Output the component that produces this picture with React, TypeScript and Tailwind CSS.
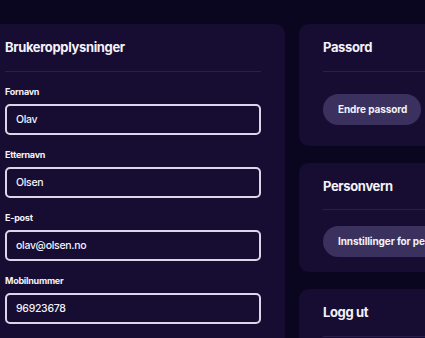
import React from "react";

const fields = [
  { label: "Fornavn", value: "Olav" },
  { label: "Etternavn", value: "Olsen" },
  { label: "E-post", value: "olav@olsen.no" },
  { label: "Mobilnummer", value: "96923678" },
];

export default function App() {
  return (
    <div className="w-[425px] h-[338px] overflow-hidden bg-[#0b0620] font-['Inter',sans-serif] text-[#f4f2f8]">
      <div className="flex items-start gap-[14px] ml-[-19px] pt-[24px]">
        {/* Brukeropplysninger */}
        <div className="w-[304px] shrink-0 rounded-[10px] bg-[#170d33] px-6 pt-[13px] pb-6">
          <h2 className="text-[13px] leading-[20px] font-bold tracking-[-0.35px]">Brukeropplysninger</h2>
          <div className="h-px bg-[#2a1f4c] mt-[14px] mb-[13px]" />
          <div className="flex flex-col gap-[13px]">
            {fields.map((f) => (
              <div key={f.label}>
                <label className="block text-[9px] leading-[14px] font-bold tracking-[-0.25px] mb-[5px]">{f.label}</label>
                <div className="h-[31px] rounded-[5px] border-2 border-[#dcd7e8] flex items-center pl-[9px] text-[10.5px] font-medium tracking-[-0.3px]">
                  {f.value}
                </div>
              </div>
            ))}
          </div>
        </div>

        {/* Right column */}
        <div className="w-[280px] shrink-0 flex flex-col gap-[17px]">
          <div className="rounded-[10px] bg-[#170d33] px-6 pt-[13px] pb-[21px]">
            <h2 className="text-[13px] leading-[20px] font-bold tracking-[-0.35px]">Passord</h2>
            <div className="h-px bg-[#2a1f4c] mt-[14px] mb-[22px]" />
            <button className="h-[31px] pl-[15px] pr-[14px] rounded-full bg-[#3a315f] text-[10px] font-bold tracking-[-0.1px]">
              Endre passord
            </button>
          </div>
          <div className="rounded-[10px] bg-[#170d33] px-6 pt-[13px] pb-[15px]">
            <h2 className="text-[13px] leading-[20px] font-bold tracking-[-0.35px]">Personvern</h2>
            <div className="h-px bg-[#2a1f4c] mt-[13px] mb-[16px]" />
            <button className="h-[31px] pl-[15px] pr-[14px] rounded-full bg-[#3a315f] text-[10px] font-bold tracking-[-0.1px] whitespace-nowrap">
              Innstillinger for personvern
            </button>
          </div>
          <div className="rounded-[10px] bg-[#170d33] px-6 pt-[13px] pb-6">
            <h2 className="text-[13px] leading-[20px] font-bold tracking-[-0.35px]">Logg ut</h2>
            <div className="h-px bg-[#2a1f4c] mt-[14px]" />
          </div>
        </div>
      </div>
    </div>
  );
}
